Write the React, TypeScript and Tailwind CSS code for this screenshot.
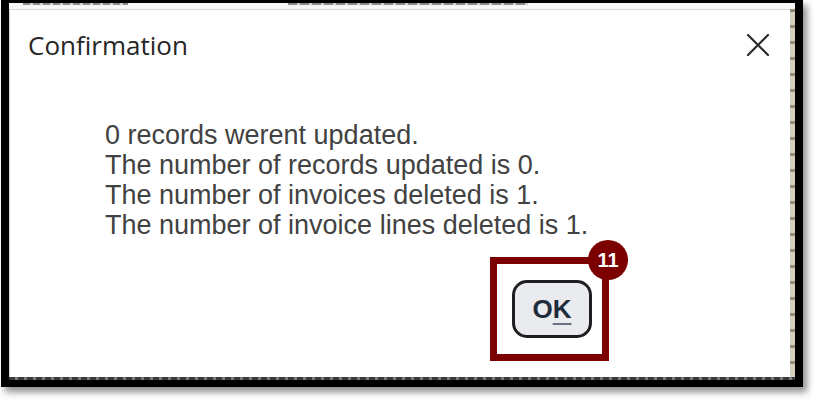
import React from "react";

const bodyLines = [
  "0 records werent updated.",
  "The number of records updated is 0.",
  "The number of invoices deleted is 1.",
  "The number of invoice lines deleted is 1.",
];

function CloseIcon() {
  return (
    <svg width="26" height="26" viewBox="0 0 26 26" fill="none">
      <path d="M3 3 L23 23 M23 3 L3 23" stroke="#2a2a2a" strokeWidth="2.2" strokeLinecap="round" />
    </svg>
  );
}

export default function App() {
  return (
    <div className="w-[819px] h-[401px] bg-white overflow-hidden">
      {/* screenshot frame */}
      <div className="ml-[1px] w-[802px] h-[387px] bg-black pt-[3px] pl-[8px] pr-[8px] pb-[7px] flex shadow-[4px_5px_7px_rgba(0,0,0,0.45)]">
        <div className="flex-1 flex flex-col bg-white">
          {/* clipped app background above the dialog */}
          <div className="h-[6px] bg-[#f6f6f6] flex items-start pl-[14px] gap-[160px]">
            <div className="w-[105px] h-[2px] bg-[repeating-linear-gradient(to_right,#8a8a8a_0_7px,#d0d0d0_7px_10px)]" />
            <div className="w-[240px] h-[2px] bg-[repeating-linear-gradient(to_right,#8a8a8a_0_9px,#d0d0d0_9px_12px)]" />
          </div>

          <div className="flex-1 flex">
            {/* dialog */}
            <div className="flex-1 flex flex-col border-t border-l border-[#d6d6d6]">
              <div className="flex items-center justify-between pl-[18px] pr-[19px] pt-[17px] h-[53px]">
                <span className="text-[26px] leading-[36px] text-[#262626] font-['Open_Sans','Noto_Sans',sans-serif]">
                  Confirmation
                </span>
                <CloseIcon />
              </div>

              <div className="pl-[95px] pt-[57px] flex flex-col font-['Liberation_Sans',Arial,sans-serif] text-[27px] leading-[30px] text-[#424242]">
                {bodyLines.map((line) => (
                  <div key={line}>{line}</div>
                ))}

                <div className="mt-[40px] ml-[407px] relative w-[80px] h-[58px]">
                  <button className="w-[80px] h-[58px] rounded-[15px] border-[3px] border-[#1e1e1e] bg-[#e9ebee] flex items-center justify-center text-[26px] font-bold text-[#1f2c3c] font-['Liberation_Sans',Arial,sans-serif]">
                    O<span className="underline decoration-[#6a7280] decoration-2 underline-offset-[5px]">K</span>
                  </button>

                  {/* annotation highlight */}
                  <div className="absolute left-[-22px] top-[-23px] w-[119px] h-[104px] border-[7px] border-[#7d0000] pointer-events-none" />
                  <div className="absolute left-[76px] top-[-40px] w-[40px] h-[40px] rounded-full bg-[#7d0000] flex items-center justify-center text-white text-[20px] font-bold font-['Liberation_Sans',Arial,sans-serif]">
                    11
                  </div>
                </div>
              </div>
            </div>

            {/* clipped app background right of the dialog */}
            <div className="w-[5px] bg-[repeating-linear-gradient(to_bottom,#8f8a78_0_3px,#d4d0c0_3px_16px)]" />
          </div>

          {/* clipped app background below the dialog */}
          <div className="h-[3px] bg-[repeating-linear-gradient(to_right,#3a3a3a_0_6px,#7a7a7a_6px_9px)]" />
        </div>
      </div>
    </div>
  );
}
